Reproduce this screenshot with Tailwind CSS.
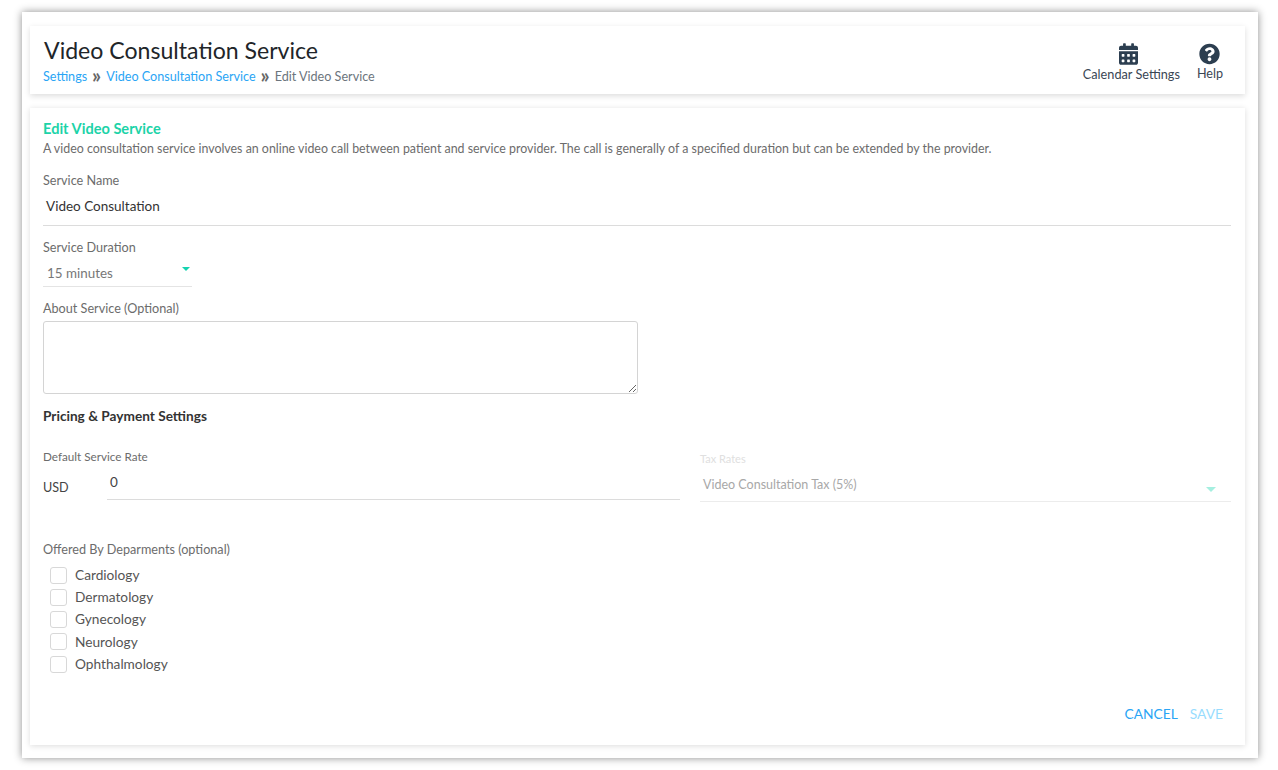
<!DOCTYPE html>
<html lang="en">
<head>
    <meta charset="UTF-8">
    <title>Edit Video Service</title>
    <script src="https://cdn.jsdelivr.net/npm/@tailwindcss/browser@4"></script>
</head>
<body class="bg-white font-['Lato',sans-serif] h-[770px] pt-[12px] pl-[22px] overflow-hidden">
    <div class="w-[1236px] h-[746px] bg-white shadow-[0_0_8px_rgba(0,0,0,0.45)] pt-[14px] pl-[8px] pr-[13px] flex flex-col gap-[14px]">

        <!-- Header -->
        <div class="h-[68px] bg-white shadow-[0_2px_6px_rgba(0,0,0,0.14)] pl-[13px] pr-[22px] flex justify-between">
            <div>
                <h1 class="text-[23.100px] leading-[30px] mt-[9px] ml-[1px] text-[#212529]">Video Consultation Service</h1>
                <div class="flex items-center text-[12.600px] leading-[18px] mt-[3px] text-[#6c757d]">
                    <a class="text-[#2aa5f5]">Settings</a>
                    <span class="w-[19px] pb-[4px] text-center text-[20px] leading-[14px] font-bold text-[#666]">»</span>
                    <a class="text-[#2aa5f5]">Video Consultation Service</a>
                    <span class="w-[19px] pb-[4px] text-center text-[20px] leading-[14px] font-bold text-[#666]">»</span>
                    <span>Edit Video Service</span>
                </div>
            </div>
            <div class="flex gap-[17px] pt-[17px]">
                <div class="flex flex-col items-center">
                    <svg class="w-[19px] h-[22px] -ml-[5px] text-[#2c3e50]" viewBox="0 0 448 512" fill="currentColor"><path d="M0 464c0 26.5 21.500 48 48 48h352c26.500 0 48-21.500 48-48V192H0v272zm320-196c0-6.600 5.400-12 12-12h40c6.600 0 12 5.400 12 12v40c0 6.600-5.400 12-12 12h-40c-6.600 0-12-5.400-12-12v-40zm0 128c0-6.600 5.400-12 12-12h40c6.600 0 12 5.400 12 12v40c0 6.600-5.400 12-12 12h-40c-6.600 0-12-5.400-12-12v-40zM192 268c0-6.600 5.400-12 12-12h40c6.600 0 12 5.400 12 12v40c0 6.600-5.400 12-12 12h-40c-6.600 0-12-5.400-12-12v-40zm0 128c0-6.600 5.400-12 12-12h40c6.600 0 12 5.400 12 12v40c0 6.600-5.400 12-12 12h-40c-6.600 0-12-5.400-12-12v-40zM64 268c0-6.600 5.400-12 12-12h40c6.600 0 12 5.400 12 12v40c0 6.600-5.400 12-12 12H76c-6.600 0-12-5.400-12-12v-40zm0 128c0-6.600 5.400-12 12-12h40c6.600 0 12 5.400 12 12v40c0 6.600-5.400 12-12 12H76c-6.600 0-12-5.400-12-12v-40zM400 64h-48V16c0-8.800-7.200-16-16-16h-32c-8.800 0-16 7.200-16 16v48H160V16c0-8.800-7.200-16-16-16h-32c-8.800 0-16 7.200-16 16v48H48C21.500 64 0 85.500 0 112v48h448v-48c0-26.500-21.500-48-48-48z"/></svg>
                    <span class="text-[12.700px] leading-[18px] text-[#3a4654]">Calendar Settings</span>
                </div>
                <div class="flex flex-col items-center">
                    <svg class="w-[21px] h-[22px] text-[#2c3e50]" viewBox="0 0 512 512" fill="currentColor"><path d="M504 256c0 137-111 248-248 248S8 393 8 256C8 119.100 119 8 256 8s248 111.100 248 248zM262.700 90c-54.500 0-89.300 23-116.500 63.800-3.500 5.300-2.400 12.400 2.700 16.300l34.700 26.300c5.200 3.900 12.600 3 16.700-2.100 17.900-22.700 30.100-35.800 57.300-35.800 20.400 0 45.700 13.100 45.700 32.900 0 15-12.400 22.700-32.500 34-23.500 13.200-54.600 29.600-54.600 70.700V300c0 6.600 5.400 12 12 12h56c6.600 0 12-5.400 12-12v-1.300c0-28.500 83.200-29.700 83.200-106.700 0-58-60.200-102-116.500-102zM256 338c-25.400 0-46 20.600-46 46 0 25.400 20.600 46 46 46s46-20.600 46-46c0-25.400-20.600-46-46-46z"/></svg>
                    <span class="text-[12.600px] leading-[18px] text-[#3a4654]">Help</span>
                </div>
            </div>
        </div>

        <!-- Form card -->
        <div class="h-[637px] bg-white shadow-[0_1px_6px_rgba(0,0,0,0.14)] pl-[13px] pr-[14px] pt-[12px] flex flex-col">
            <h2 class="text-[14.600px] leading-[18px] font-bold text-[#1cd3a8]">Edit Video Service</h2>
            <p class="text-[12.400px] leading-[18px] mt-[2px] text-[#6c6c6c]">A video consultation service involves an online video call between patient and service provider. The call is generally of a specified duration but can be extended by the provider.</p>

            <label class="text-[12.650px] leading-[18px] mt-[14px] text-[#6c6c6c]">Service Name</label>
            <div class="h-[36px] pl-[3px] pt-[7px] border-b border-[#dcdcdc] text-[13.500px] leading-[18px] text-[#333]">Video Consultation</div>

            <label class="text-[12.650px] leading-[18px] mt-[13px] text-[#6c6c6c]">Service Duration</label>
            <div class="relative w-[149px] h-[30px] pl-[4px] pt-[7px] border-b border-[#e4e4e4] text-[13.400px] leading-[18px] text-[#777]">
                15 minutes
                <span class="absolute right-[2px] top-[10px] w-0 h-0 border-x-[4px] border-x-transparent border-t-[4px] border-t-[#14d3b0]"></span>
            </div>

            <label class="text-[12.650px] leading-[18px] mt-[13px] text-[#6c6c6c]">About Service (Optional)</label>
            <textarea class="w-[595px] h-[73px] mt-[3px] border border-[#d4d4d4] rounded-[3px]"></textarea>

            <h3 class="text-[13.650px] leading-[18px] mt-[13px] font-bold text-[#333]">Pricing &amp; Payment Settings</h3>

            <div class="flex mt-[24px] h-[66px]">
                <div class="w-[637px]">
                    <label class="block text-[11.700px] leading-[14px] text-[#6c6c6c]">Default Service Rate</label>
                    <div class="flex mt-[3px]">
                        <span class="w-[64px] pt-[13px] text-[12.600px] leading-[18px] text-[#444]">USD</span>
                        <div class="flex-1 h-[34px] pl-[3px] pt-[7px] border-b border-[#dcdcdc] text-[13.500px] leading-[18px] text-[#444]">0</div>
                    </div>
                </div>
                <div class="relative flex-1 ml-[20px] mt-[3px] h-[50px] border-b border-[#ececec]">
                    <label class="block text-[11px] leading-[14px] text-[#e0e0e0]">Tax Rates</label>
                    <div class="pl-[3px] pt-[10px] text-[12.500px] leading-[18px] text-[#a8a8a8]">Video Consultation Tax (5%)</div>
                    <span class="absolute right-[15px] top-[35px] w-0 h-0 border-x-[5px] border-x-transparent border-t-[5px] border-t-[#a5efe0]"></span>
                </div>
            </div>

            <label class="text-[12.650px] leading-[18px] mt-[26px] text-[#6c6c6c]">Offered By Deparments (optional)</label>
            <div class="flex flex-col mt-[5px] pl-[7px] text-[13.700px] text-[#555]">
                <div class="flex items-center gap-[8px] h-[22.250px]"><span class="w-[17px] h-[17px] border border-[#d8d8d8] rounded-[3px]"></span>Cardiology</div>
                <div class="flex items-center gap-[8px] h-[22.250px]"><span class="w-[17px] h-[17px] border border-[#d8d8d8] rounded-[3px]"></span>Dermatology</div>
                <div class="flex items-center gap-[8px] h-[22.250px]"><span class="w-[17px] h-[17px] border border-[#d8d8d8] rounded-[3px]"></span>Gynecology</div>
                <div class="flex items-center gap-[8px] h-[22.250px]"><span class="w-[17px] h-[17px] border border-[#d8d8d8] rounded-[3px]"></span>Neurology</div>
                <div class="flex items-center gap-[8px] h-[22.250px]"><span class="w-[17px] h-[17px] border border-[#d8d8d8] rounded-[3px]"></span>Ophthalmology</div>
            </div>

            <div class="flex justify-end gap-[12px] mt-auto mb-[22px] pr-[8px] text-[13.800px] leading-[18px]">
                <button class="text-[#2aa5f5]">CANCEL</button>
                <button class="text-[#98dcfe]">SAVE</button>
            </div>
        </div>
    </div>
</body>
</html>
